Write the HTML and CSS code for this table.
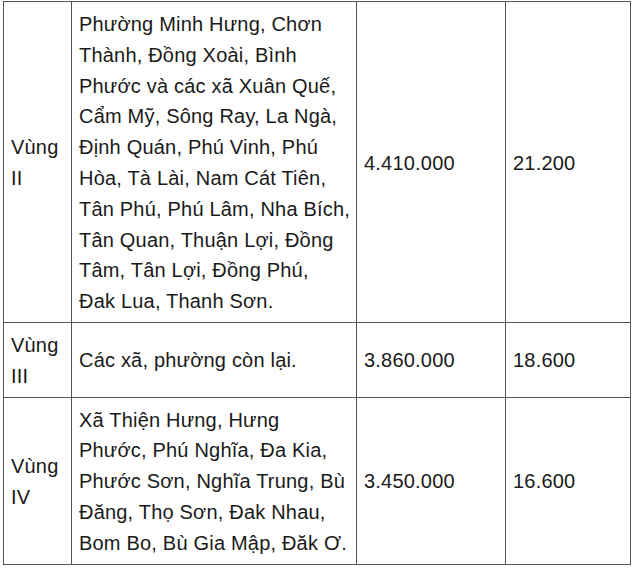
FILE: index.html
```html
<!DOCTYPE html>
<html lang="vi">
<head>
<meta charset="utf-8">
<title>Vùng lương tối thiểu</title>
<link rel="stylesheet" href="styles.css">
</head>
<body>
<table class="wage-table">
  <colgroup>
    <col class="c-zone">
    <col class="c-area">
    <col class="c-month">
    <col class="c-hour">
  </colgroup>
  <tbody>
    <tr>
      <td>Vùng II</td>
      <td class="area">Phường Minh Hưng, Chơn<br>Thành, Đồng Xoài, Bình<br>Phước và các xã Xuân Quế,<br>Cẩm Mỹ, Sông Ray, La Ngà,<br>Định Quán, Phú Vinh, Phú<br>Hòa, Tà Lài, Nam Cát Tiên,<br>Tân Phú, Phú Lâm, Nha Bích,<br>Tân Quan, Thuận Lợi, Đồng<br>Tâm, Tân Lợi, Đồng Phú,<br>Đak Lua, Thanh Sơn.</td>
      <td>4.410.000</td>
      <td>21.200</td>
    </tr>
    <tr>
      <td>Vùng III</td>
      <td class="area">Các xã, phường còn lại.</td>
      <td>3.860.000</td>
      <td>18.600</td>
    </tr>
    <tr>
      <td>Vùng IV</td>
      <td class="area">Xã Thiện Hưng, Hưng<br>Phước, Phú Nghĩa, Đa Kia,<br>Phước Sơn, Nghĩa Trung, Bù<br>Đăng, Thọ Sơn, Đak Nhau,<br>Bom Bo, Bù Gia Mập, Đăk Ơ.</td>
      <td>3.450.000</td>
      <td>16.600</td>
    </tr>
  </tbody>
</table>
</body>
</html>
```
FILE: styles.css
```css
html, body {
  margin: 0;
  padding: 0;
  background: #ffffff;
}

body {
  padding: 1px 0 0 3px;
  font-family: "Liberation Sans", Arial, Helvetica, sans-serif;
  font-size: 20px;
  line-height: 30.8px;
  letter-spacing: 0.2px;
  color: #1a1a1a;
}

.wage-table {
  border-collapse: collapse;
  table-layout: fixed;
  width: 627px;
}

.c-zone { width: 68px; }
.c-area { width: 285px; }
.c-month { width: 149px; }
.c-hour { width: 125px; }

.wage-table td {
  border: 1px solid #555555;
  padding: 7px 7px 5px 7px;
  vertical-align: middle;
  text-align: left;
}

.wage-table td.area {
  white-space: nowrap;
}
```
